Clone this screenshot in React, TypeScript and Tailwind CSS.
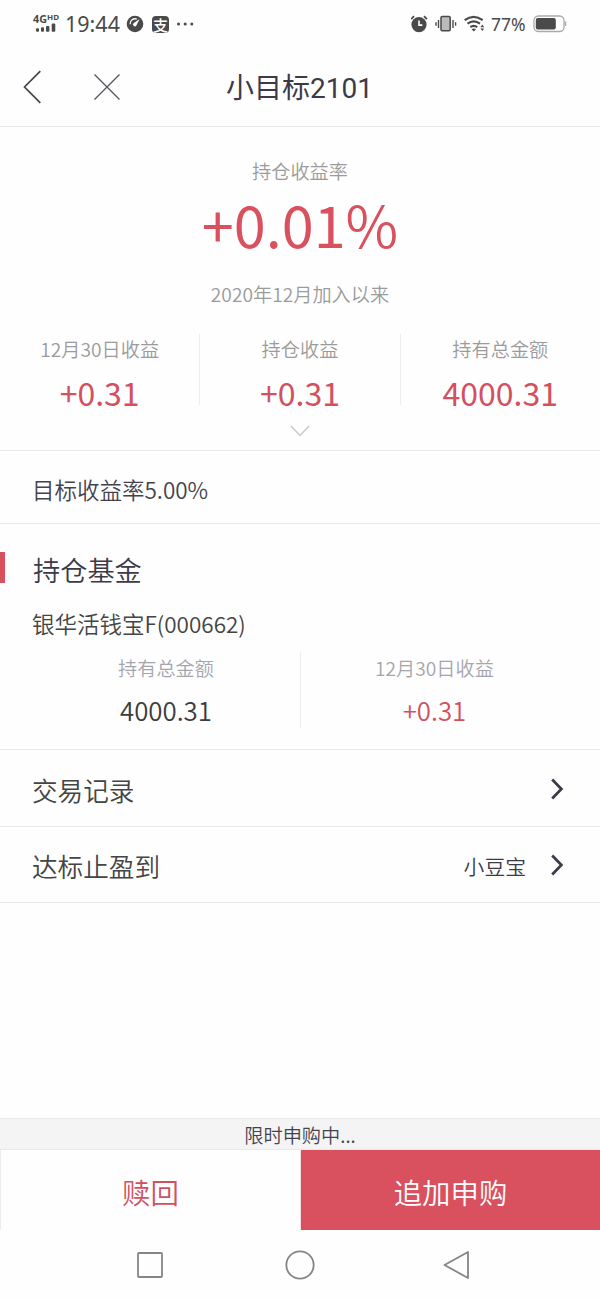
import type { ReactNode } from 'react';

function StatusBar() {
  return (
    <div className="flex h-12 items-center justify-between pl-[33px] pr-[33px] font-normal text-[#4a4a4a]">
      <div className="flex items-center">
        <svg width="28" height="28" viewBox="0 -4 28 28" fill="currentColor">
          <text x="0" y="8.8" fontSize="11" fontWeight="700" fontFamily="Noto Sans, sans-serif" textLength="14" lengthAdjust="spacingAndGlyphs">4G</text>
          <text x="14" y="6.3" fontSize="7.8" fontWeight="700" fontFamily="Noto Sans, sans-serif" textLength="12" lengthAdjust="spacingAndGlyphs">HD</text>
          <rect x="3" y="14.3" width="3" height="3.4" rx="1" />
          <rect x="8" y="13.2" width="3" height="4.5" rx="1" />
          <rect x="13" y="12" width="3.4" height="5.7" rx="1" />
          <rect x="18.7" y="9.5" width="3.6" height="8.2" rx="1" />
        </svg>
        <span className="ml-1 w-[56px] whitespace-nowrap font-['Noto_Sans',sans-serif] text-[21.5px] leading-6">19:44</span>
        <svg className="ml-[5px]" width="18" height="18" viewBox="0 0 18 18">
          <circle cx="9" cy="9" r="8.3" fill="currentColor" />
          <path d="M4.1 9.2A5 5 0 0 1 10.8 4.1" fill="none" stroke="#fefefe" strokeWidth="1.3" />
          <path d="M13.6 4.1 10.5 10.2A1.8 1.8 0 1 1 7.9 7.9Z" fill="#fefefe" />
        </svg>
        <span className="ml-2 flex h-[17px] w-[17px] items-center justify-center rounded bg-[#4a4a4a] text-[15px] font-medium leading-none text-[#fefefe]">支</span>
        <svg className="ml-[7px]" width="19" height="6" viewBox="0 0 19 6" fill="currentColor">
          <circle cx="2.5" cy="3" r="1.5" />
          <circle cx="9.2" cy="3" r="1.5" />
          <circle cx="15.8" cy="3" r="1.5" />
        </svg>
      </div>
      <div className="flex items-center">
        <svg width="18" height="18" viewBox="0 0 18 18" fill="none" stroke="currentColor">
          <circle cx="8" cy="9.6" r="7.6" fill="currentColor" stroke="none" />
          <path d="M.1 4.1 3 1.2M13 1.2l2.9 2.9" strokeWidth="1.8" />
          <path d="M8 5.4v4.7h3.4" stroke="#fefefe" strokeWidth="1.6" />
        </svg>
        <svg className="ml-1.5" width="22" height="18" viewBox="0 0 22 18" fill="none" stroke="currentColor" strokeWidth="1.4">
          <rect x="6" y="1.5" width="9.2" height="14.3" rx="1.2" fill="#bbb" strokeWidth="1.5" />
          <path d="M3.5 5v8M1 7.2v3.6M18 5v8M20.6 7.2v3.6" />
        </svg>
        <svg className="ml-[7px]" width="22" height="18" viewBox="0 0 22 18" fill="none" stroke="currentColor" strokeWidth="2.2">
          <path d="M.7 5.2Q9.6-1.6 18.7 5.2M3.5 8.7Q9.7 4 16 8.7M6.3 12.1Q9.7 9.5 13.2 12.1" />
          <path d="m7.6 14.2 2.2 2.4 2.2-2.4q-2.2-1.6-4.4 0Z" fill="currentColor" stroke="none" />
          <path d="m18.3 9.5 1.9 2.7h-3.8Zm0 6.6 1.9-2.7h-3.8Z" fill="currentColor" stroke="none" />
        </svg>
        <span className="ml-[5px] w-[36px] whitespace-nowrap font-['Noto_Sans',sans-serif] text-[17.5px] leading-6">77%</span>
        <svg className="ml-[6px]" width="34" height="18" viewBox="0 0 34 18">
          <rect x="1" y="1" width="30" height="15.5" rx="4.5" fill="none" stroke="#aaa" strokeWidth="1.3" />
          <rect x="2.8" y="3" width="20" height="11.5" rx="2" fill="#4a4a4a" />
          <path d="M32.5 6.5v4.5" stroke="#aaa" strokeWidth="1.5" />
        </svg>
      </div>
    </div>
  );
}

function Header() {
  return (
    <header className="flex h-[79px] items-center border-b border-[#e9e9eb]">
      <div className="flex w-[226px] items-center pl-[22px]">
        <svg width="20" height="34" viewBox="0 0 20 34" fill="none" stroke="#44444c" strokeWidth="1.7">
          <path d="M18.3 1.2 2.5 17l15.8 15.8" />
        </svg>
        <svg className="ml-[51px]" width="28" height="28" viewBox="0 0 28 28" fill="none" stroke="#55555c" strokeWidth="1.3">
          <path d="m1.5 1.5 25 25M26.5 1.5l-25 25" />
        </svg>
      </div>
      <h1 className="whitespace-nowrap pt-1 font-[Roboto,'Noto_Sans_CJK_SC',sans-serif] text-[28px] font-normal leading-10 text-[#3c3a48]">小目标2101</h1>
    </header>
  );
}

function Stat({ label, value }: { label: string; value: string }) {
  return (
    <div className="flex flex-1 flex-col items-center">
      <span className="mt-px text-[19.2px] leading-7 text-[#9b9b9b]">{label}</span>
      <span className="mt-[9px] text-[32px] font-normal leading-10 text-[#d4505f]">{value}</span>
    </div>
  );
}

function Divider() {
  return <div className="w-px bg-[#ededf0]" />;
}

function Summary() {
  return (
    <section className="flex h-[324px] flex-col items-center border-b border-[#e9e9eb]">
      <p className="mt-[30px] text-[19.2px] leading-7 text-[#9b9b9b]">持仓收益率</p>
      <p className="mt-[3px] text-[57.6px] font-normal leading-[70px] text-[#d9505f]">+0.01<span className="font-[350]">%</span></p>
      <p className="mt-[22px] text-[19.2px] leading-7 text-[#9b9b9b]">2020年12月加入以来</p>
      <div className="mt-[26px] flex h-[71px] w-full">
        <Stat label="12月30日收益" value="+0.31" />
        <Divider />
        <Stat label="持仓收益" value="+0.31" />
        <Divider />
        <Stat label="持有总金额" value="4000.31" />
      </div>
      <svg className="mt-5" width="20" height="12" viewBox="0 0 20 12" fill="none" stroke="#c9c9cd" strokeWidth="1.5">
        <path d="m1 1 9 9.5L19 1" />
      </svg>
    </section>
  );
}

function Holding({ label, value, color }: { label: string; value: string; color: string }) {
  return (
    <div className="flex flex-col items-center">
      <span className="mt-0.5 text-[19.2px] leading-7 text-[#a5a5ad]">{label}</span>
      <span className={`mt-2.5 text-[25.8px] leading-9 ${color}`}>{value}</span>
    </div>
  );
}

function Funds() {
  return (
    <section className="h-[226px] border-b border-[#e9e9eb] pt-7">
      <div className="flex h-[30px] items-center">
        <span className="h-[31px] w-[5px] bg-[#d9505f]" />
        <h2 className="ml-7 mt-1 text-[27.2px] font-[350] leading-[30px] text-[#3c3a48]">持仓基金</h2>
      </div>
      <p className="ml-8 mt-[25px] text-[22.5px] leading-8 text-[#444]">银华活钱宝F(000662)</p>
      <div className="mt-[13px] flex h-[76px]">
        <div className="flex w-[300px] justify-center pl-8">
          <Holding label="持有总金额" value="4000.31" color="text-[#3c3c3e]" />
        </div>
        <Divider />
        <div className="flex flex-1 justify-center pr-8">
          <Holding label="12月30日收益" value="+0.31" color="text-[#d4505f]" />
        </div>
      </div>
    </section>
  );
}

function Row({ label, children }: { label: string; children?: ReactNode }) {
  return (
    <div className="flex h-[76.5px] items-center border-b border-[#e9e9eb] pl-8 pr-9 text-[#444]">
      <span className="flex-1 pt-1 text-[25.6px] leading-10">{label}</span>
      <span className="pt-1 text-[20.8px] leading-8 text-[#3c3a48]">{children}</span>
      <svg className="ml-6 mt-0.5" width="14" height="22" viewBox="0 0 14 22" fill="none" stroke="#3c3a48" strokeWidth="2.7">
        <path d="m2.2 1.5 9.2 9.5-9.2 9.5" />
      </svg>
    </div>
  );
}

function Actions() {
  return (
    <footer>
      <div className="flex h-8 items-center justify-center border-y border-[#e9e9ea] bg-[#f4f4f5] pt-0.5 text-[19.2px] leading-7 text-[#44434d]">限时申购中...</div>
      <div className="flex h-20 text-[28.4px]">
        <button className="flex w-[300px] items-center justify-center border-l border-[#ececee] pt-1 text-[#d4505f]">赎回</button>
        <button className="flex flex-1 items-center justify-center border-l border-[#f4dfe2] bg-[#d9505f] pt-1 text-white">追加申购</button>
      </div>
      <nav className="flex h-[70px] items-center justify-center">
        <svg width="348" height="32" viewBox="0 0 348 32" fill="none" stroke="#858585" strokeWidth="1.8" strokeLinejoin="round">
          <rect x="12" y="4" width="24" height="24" rx="1" />
          <circle cx="174" cy="16" r="13.7" />
          <path d="M342 3v26l-23.5-13Z" />
        </svg>
      </nav>
    </footer>
  );
}

export default function App() {
  return (
    <main className="flex h-[1300px] w-[600px] flex-col bg-[#fefefe] font-['Noto_Sans_CJK_SC',sans-serif] font-[350]">
      <StatusBar />
      <Header />
      <Summary />
      <section className="flex h-[73px] items-center border-b border-[#e9e9eb] pl-8 pt-1 text-[22.5px] leading-8 text-[#44434d]">目标收益率5.00%</section>
      <Funds />
      <Row label="交易记录" />
      <Row label="达标止盈到">小豆宝</Row>
      <div className="flex-1" />
      <Actions />
    </main>
  );
}
